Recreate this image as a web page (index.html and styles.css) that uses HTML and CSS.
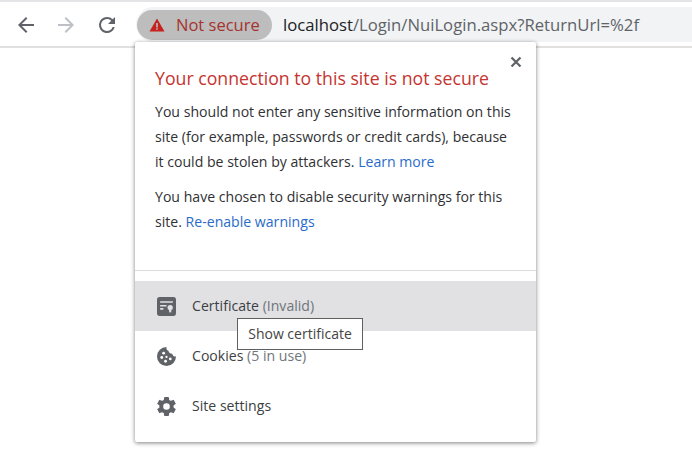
FILE: index.html
```html
<!DOCTYPE html>
<html>
<head>
    <title>Not secure</title>
    <link rel="stylesheet" href="styles.css">
</head>
<body>
    <div class="toolbar">
        <div class="nav-buttons">
            <svg class="nav-icon" viewBox="0 0 24 24"><path d="M20 11H7.8l5.6-5.6L12 4l-8 8 8 8 1.4-1.4L7.8 13H20z" fill="#5f6368"/></svg>
            <svg class="nav-icon" viewBox="0 0 24 24"><path d="M4 11h12.2l-5.6-5.6L12 4l8 8-8 8-1.400-1.400 5.600-5.600H4z" fill="#bdc1c6"/></svg>
            <svg class="nav-icon reload" viewBox="0 0 24 24"><path d="M17.650 6.350A7.960 7.960 0 0 0 12 4a8 8 0 1 0 7.730 10h-2.080A6 6 0 1 1 12 6c1.660 0 3.140.690 4.220 1.780L13 11h7V4z" fill="#5f6368"/></svg>
        </div>
        <div class="address-bar">
            <div class="security-pill">
                <svg class="warn-icon" viewBox="0 0 16 16"><path d="M8 1.500L15.500 14.500H.5z" fill="#c5221f"/><path d="M7.200 6h1.600v4.400H7.200zM7.200 11.200h1.600v1.600H7.200z" fill="#bdbdbd"/></svg>
                <span>Not secure</span>
            </div>
            <div class="url"><span class="host">localhost</span>/Login/NuiLogin.aspx?ReturnUrl=%2f</div>
        </div>
    </div>

    <div class="popup">
        <div class="popup-head">
            <h1>Your connection to this site is not secure</h1>
            <svg class="close" viewBox="0 0 12 12"><path d="M1.500 1.500l9 9M10.500 1.500l-9 9" stroke="#5f6368" stroke-width="2.200" fill="none"/></svg>
            <p>You should not enter any sensitive information on this site (for example, passwords or credit cards), because it could be stolen by attackers. <a href="#">Learn more</a></p>
            <p>You have chosen to disable security warnings for this site. <a href="#">Re-enable warnings</a></p>
        </div>
        <div class="menu">
            <div class="menu-row active">
                <svg class="row-icon" viewBox="0 0 18 18"><path d="M2.500 0h13A2.500 2.500 0 0 1 18 2.500v13a2.500 2.500 0 0 1-2.500 2.500h-13A2.500 2.500 0 0 1 0 15.500v-13A2.500 2.500 0 0 1 2.500 0z" fill="#5f6368"/><path d="M3 4h12v1.500H3zM3 7.500h6V9H3zM3 10.500h3V12H3z" fill="#e1e1e3"/><circle cx="12.500" cy="10" r="2.500" fill="#e1e1e3"/><path d="M11.500 12h2v3l-1-.8-1 .8z" fill="#e1e1e3"/></svg>
                <span class="row-label">Certificate <span class="muted">(Invalid)</span></span>
            </div>
            <div class="menu-row">
                <svg class="row-icon" viewBox="0 0 20 20"><path d="M10 0a10 10 0 1 0 10 10 4 4 0 0 1-4-3 4 4 0 0 1-4-3 3.500 3.500 0 0 1-2-4z" fill="#5f6368"/><g fill="#fff"><circle cx="7" cy="6.500" r="1.500"/><circle cx="5" cy="11" r="1.500"/><circle cx="10" cy="10.500" r="1.200"/><circle cx="14" cy="12.500" r="1.400"/><circle cx="9" cy="15" r="1.500"/></g></svg>
                <span class="row-label">Cookies <span class="muted">(5 in use)</span></span>
            </div>
            <div class="menu-row">
                <svg class="row-icon" viewBox="2 2 20 20"><path d="M19.430 12.980c.04-.32.07-.64.07-.98s-.03-.66-.07-.98l2.110-1.650a.5.5 0 0 0 .12-.64l-2-3.460a.5.5 0 0 0-.61-.22l-2.490 1a7.300 7.300 0 0 0-1.690-.98l-.38-2.650A.49.49 0 0 0 14 2h-4a.49.49 0 0 0-.49.420l-.38 2.650c-.61.250-1.170.59-1.690.98l-2.490-1a.49.49 0 0 0-.61.220l-2 3.460a.49.49 0 0 0 .12.640l2.110 1.650c-.04.320-.07.650-.07.980s.03.660.07.980l-2.110 1.650a.5.5 0 0 0-.12.640l2 3.460c.12.220.39.300.61.220l2.490-1c.52.400 1.080.730 1.690.980l.38 2.650c.03.240.24.420.49.420h4c.25 0 .46-.18.490-.42l.38-2.650c.61-.25 1.170-.59 1.690-.98l2.490 1c.23.090.49 0 .61-.22l2-3.460a.5.5 0 0 0-.12-.64zM12 15.500a3.500 3.500 0 1 1 0-7 3.500 3.500 0 0 1 0 7z" fill="#5f6368"/></svg>
                <span class="row-label">Site settings</span>
            </div>
        </div>
        <div class="tooltip">Show certificate</div>
    </div>
</body>
</html>
```

FILE: styles.css
```css
* {
    margin: 0;
    padding: 0;
    box-sizing: border-box;
}

body {
    font-family: "Open Sans", "Noto Sans", sans-serif;
    background-color: white;
    color: #3c4043;
    overflow: hidden;
}

.toolbar {
    display: flex;
    align-items: center;
    height: 48px;
    padding: 7px 0 6px 14px;
    border-top: 2px solid #e4e4e6;
    border-bottom: 2px solid #e0e0e0;
}

.nav-buttons {
    display: flex;
    gap: 16px;
    width: 122px;
}

.nav-icon {
    width: 24px;
    height: 24px;
}

.reload {
    margin-left: 1px;
}

.address-bar {
    flex: 1;
    display: flex;
    align-items: center;
    height: 35px;
    background-color: #f1f3f4;
    border-radius: 18px 0 0 18px;
}

.security-pill {
    display: flex;
    align-items: center;
    gap: 11px;
    width: 135px;
    height: 30px;
    margin-left: 1px;
    padding-left: 12px;
    background-color: #bdbdbd;
    border-radius: 15px;
    color: #a5332f;
    font-size: 16.500px;
}

.warn-icon {
    width: 16px;
    height: 16px;
}

.url {
    margin-left: 11px;
    font-size: 16.700px;
    color: #5f6368;
    white-space: nowrap;
}

.host {
    color: #202124;
}

.popup {
    position: absolute;
    left: 135px;
    top: 42px;
    width: 401px;
    height: 400px;
    background-color: white;
    border-radius: 2px;
    box-shadow: 0 1px 4px rgba(0, 0, 0, 0.5);
}

.popup-head {
    position: relative;
    height: 229px;
    padding: 23px 20px 0 20px;
    border-bottom: 1px solid #dadce0;
}

.popup-head h1 {
    font-size: 17.700px;
    font-weight: normal;
    line-height: 26px;
    color: #c5342f;
    margin-bottom: 8px;
    white-space: nowrap;
}

.popup-head p {
    font-size: 14.100px;
    line-height: 25px;
    margin-bottom: 10px;
    color: #303134;
}

.popup-head a {
    color: #2a6bc9;
    text-decoration: none;
}

.close {
    position: absolute;
    right: 14px;
    top: 14px;
    width: 12px;
    height: 12px;
}

.menu {
    margin-top: 10px;
}

.menu-row {
    display: flex;
    align-items: center;
    gap: 16px;
    height: 50px;
    padding-left: 22px;
    font-size: 14.100px;
}

.menu-row.active {
    background-color: #e1e1e3;
}

.row-icon {
    width: 19px;
    height: 19px;
}

.row-label {
    margin-bottom: 2px;
}

.muted {
    color: #70757a;
}

.tooltip {
    position: absolute;
    left: 102px;
    top: 276px;
    width: 126px;
    height: 32px;
    border: 1px solid #5f5f5f;
    background-color: white;
    font-size: 14px;
    line-height: 30px;
    text-align: center;
    color: #444;
}
```
